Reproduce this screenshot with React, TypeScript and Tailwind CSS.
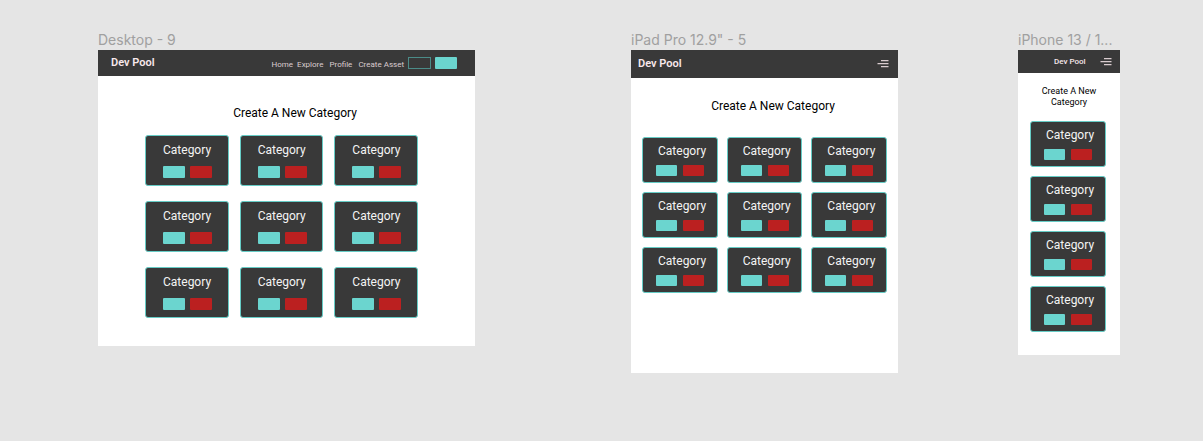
import { clsx } from "clsx";

type CardSize = "regular" | "compact";

function CategoryCard({ size }: { size: CardSize }) {
  const compact = size === "compact";
  return (
    <article
      className={clsx(
        "min-w-0 rounded-[3px] border border-[#66ccc6] bg-[#393939]",
        compact ? "h-[46px] pl-[13px] pt-[5px]" : "h-[51px] pl-[17px] pt-[6px]",
      )}
    >
      <h2
        className={clsx(
          "text-xs leading-4 text-[#f4f4f4]",
          compact && "pl-[2px]",
        )}
      >
        Category
      </h2>
      <div
        className={clsx(
          "flex",
          compact ? "mt-[6px] gap-[6px]" : "mt-[8px] gap-[5px]",
        )}
      >
        <button
          type="button"
          aria-label="Open category"
          className={clsx(
            "rounded-[1px] bg-[#6bd5cf]",
            compact ? "h-[11px] w-[21px]" : "h-[12px] w-[22px]",
          )}
        />
        <button
          type="button"
          aria-label="Delete category"
          className={clsx(
            "rounded-[1px] bg-[#bb2020]",
            compact ? "h-[11px] w-[21px]" : "h-[12px] w-[22px]",
          )}
        />
      </div>
    </article>
  );
}

function Cards({ count, size }: { count: number; size: CardSize }) {
  return (
    <>
      {Array.from({ length: count }, (_, i) => (
        <CategoryCard key={i} size={size} />
      ))}
    </>
  );
}

function MenuButton() {
  return (
    <button type="button" aria-label="Menu" className="shrink-0">
      <svg
        width="12"
        height="10"
        viewBox="0 0 12 10"
        fill="none"
        stroke="#d9cccf"
        strokeWidth="1.2"
      >
        <path d="M4 1.6h7.5M0.5 4.6h11M4 7.6h7.5" />
      </svg>
    </button>
  );
}

function FrameLabel({ children }: { children: string }) {
  return (
    <p className="truncate font-['Inter',sans-serif] text-sm leading-5 text-[#a0a0a0]">
      {children}
    </p>
  );
}

function DesktopFrame() {
  return (
    <section className="col-start-2 min-w-0">
      <FrameLabel>Desktop - 9</FrameLabel>
      <div className="bg-white pb-[28px]">
        <header className="flex h-[26px] items-center justify-between bg-[#393939] pl-[13px] pr-[18px]">
          <span className="whitespace-nowrap text-[11px] font-semibold text-[#f8e8ec]">
            Dev Pool
          </span>
          <div className="flex items-center gap-[4px]">
            <nav className="flex whitespace-nowrap pt-[4px] text-[8px] leading-3 text-[#d9cccf]">
              <a href="#home" className="mr-[4px]">Home</a>
              <a href="#explore" className="mr-[6px]">Explore</a>
              <a href="#profile" className="mr-[6px]">Profile</a>
              <a href="#create">Create Asset</a>
            </nav>
            <button
              type="button"
              aria-label="Log in"
              className="h-[12px] w-[23px] border border-[#4b8c88]"
            />
            <button
              type="button"
              aria-label="Sign up"
              className="h-[12px] w-[22px] rounded-[1px] bg-[#6bd5cf]"
            />
          </div>
        </header>
        <h1 className="pl-[17px] pt-[29px] text-center text-xs leading-4 text-black">
          Create A New Category
        </h1>
        <div className="ml-[47px] mr-[57px] mt-[14px] grid grid-cols-3 gap-x-[11px] gap-y-[15px]">
          <Cards count={9} size="regular" />
        </div>
      </div>
    </section>
  );
}

function TabletFrame() {
  return (
    <section className="col-start-4 min-w-0">
      <FrameLabel>iPad Pro 12.9" - 5</FrameLabel>
      <div className="bg-white pb-[80px]">
        <header className="flex h-[28px] items-center justify-between bg-[#393939] pl-[7px] pr-[9px]">
          <span className="text-[11px] font-semibold text-[#f8e8ec]">Dev Pool</span>
          <MenuButton />
        </header>
        <h1 className="pl-[17px] pt-[20px] text-center text-xs leading-4 text-black">
          Create A New Category
        </h1>
        <div className="ml-[11px] mr-[11px] mt-[23px] grid grid-cols-3 gap-x-[9px] gap-y-[9px]">
          <Cards count={9} size="compact" />
        </div>
      </div>
    </section>
  );
}

function PhoneFrame() {
  return (
    <section className="col-start-6 min-w-0">
      <FrameLabel>iPhone 13 / 1...</FrameLabel>
      <div className="bg-white pb-[23px]">
        <header className="flex h-[23px] items-center justify-between bg-[#393939] pl-[36px] pr-[8px]">
          <span className="whitespace-nowrap text-[8px] font-medium text-[#f8e8ec]">
            Dev Pool
          </span>
          <MenuButton />
        </header>
        <h1 className="px-[20px] pt-[13px] text-center text-[9px] leading-[11px] text-black">
          Create A New Category
        </h1>
        <div className="ml-[12px] mr-[14px] mt-[13px] grid gap-y-[9px]">
          <Cards count={4} size="compact" />
        </div>
      </div>
    </section>
  );
}

export default function App() {
  return (
    <main className="grid min-h-screen grid-cols-[98fr_377fr_156fr_267fr_120fr_102fr_83fr] items-start bg-[#e5e5e5] pt-[30px] font-['Roboto',sans-serif]">
      <DesktopFrame />
      <TabletFrame />
      <PhoneFrame />
    </main>
  );
}
